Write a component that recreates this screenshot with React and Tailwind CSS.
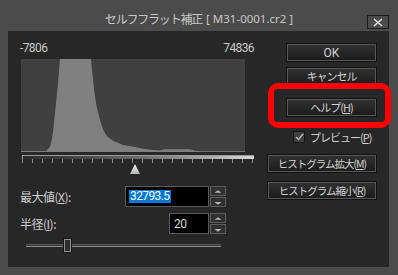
import React from "react";

const jp = { fontFamily: '"Noto Sans CJK JP", "Noto Sans", sans-serif' };
const latin = { fontFamily: '"Noto Sans", "Noto Sans CJK JP", sans-serif' };
const num = { fontFamily: 'Roboto, "Liberation Sans", sans-serif' };

// histogram outline in plot coordinates (224 x 93)
const HIST =
  "0,93 0,92 25.7,92 25.7,91.7 29,87.7 30.7,81 32.3,71 34,54 35.7,37.7 37.3,21 38.3,9 39,0 " +
  "70,0 71.7,17.7 73.3,32.7 75.7,47.7 79,61 82.3,71 85.7,77 92.3,82 102.3,86 112.3,87.7 " +
  "122.3,89.7 132.3,91 139,91.5 144,90.3 169,90.3 174,91.7 179,92.3 224,92.3 224,93";

function Btn({ children, w = "w-[91px]", text = "text-[11px] tracking-[-1px]" }) {
  return (
    <div
      className={`${w} ${text} h-[19px] border border-[#111111] bg-gradient-to-b from-[#323232] to-[#1b1b1b] shadow-[inset_0_0_0_1px_#575757] flex items-center justify-center text-[#d2d2d2]`}
      style={jp}
    >
      {children}
    </div>
  );
}

function Key({ k }) {
  return (
    <span>
      (<span className="underline underline-offset-1">{k}</span>)
    </span>
  );
}

function Spinner() {
  return (
    <div className="flex flex-col gap-[1px] w-[16px]">
      {["M4 6 L8 3 L12 6 Z", "M4 4 L8 7 L12 4 Z"].map((d, i) => (
        <div
          key={i}
          className="h-[10px] bg-[#303030] border border-[#5c5c5c] flex items-center justify-center"
        >
          <svg width="16" height="9" viewBox="0 0 16 9">
            <path d={d} fill="#b8b8b8" />
          </svg>
        </div>
      ))}
    </div>
  );
}

export default function App() {
  return (
    <div className="relative w-[398px] h-[275px] bg-[#4b4b4b] overflow-hidden">
      {/* title bar */}
      <div className="h-[31px] flex items-center justify-center pt-[7px] text-[#c8c8c8]">
        <span className="text-[12px] tracking-[-1.2px]" style={jp}>
          セルフフラット補正
        </span>
        <span className="ml-[4px] text-[11.5px] whitespace-pre" style={latin}>
          {"[ M31-0001.cr2 ]"}
        </span>
      </div>
      <div className="absolute left-[367px] top-[15px] w-[22px] h-[14px] border border-[#1c1c1c] flex items-center justify-center">
        <svg width="10" height="9" viewBox="0 0 10 9">
          <path d="M1 1 L9 8 M9 1 L1 8" stroke="#e6e6e6" strokeWidth="1.6" />
        </svg>
      </div>

      {/* client area */}
      <div className="ml-[8px] w-[381px] h-[236px] bg-[#272727] flex">
        {/* left column */}
        <div className="w-[246px] pl-[12px] flex flex-col">
          <div
            className="mt-[11px] w-[234px] h-[12px] flex justify-between items-center text-[12px] tracking-[-0.6px] leading-[12px] text-[#c8c8c8]"
            style={num}
          >
            <span>-7806</span>
            <span>74836</span>
          </div>
          <div className="mt-[5px] ml-[1px] w-[224px] h-[93px] bg-[#404040]">
            <svg width="224" height="93" viewBox="0 0 224 93">
              <polygon points={HIST} fill="#808080" />
            </svg>
          </div>
          {/* ruler */}
          <div className="mt-[3px] ml-[2px] w-[232px] flex flex-col">
            <div className="h-[1px] bg-[#9c9c9c]" />
            <div className="h-[3px] border-l border-[#9c9c9c] bg-gradient-to-r from-[#2a2a2a] via-[#6a6a6a] to-[#d8d8d8]" />
            <div className="h-[4px] bg-[repeating-linear-gradient(to_right,#8c8c8c_0_1px,transparent_1px_10px)]" />
          </div>
          <div className="mt-[1px] ml-[110px] w-[10px] h-[10px]">
            <svg width="10" height="10" viewBox="0 0 10 10">
              <defs>
                <linearGradient id="tri" x1="0" y1="0" x2="0" y2="1">
                  <stop offset="0" stopColor="#f4f4f4" />
                  <stop offset="1" stopColor="#b4b4b4" />
                </linearGradient>
              </defs>
              <polygon points="5,0 10,10 0,10" fill="url(#tri)" />
            </svg>
          </div>

          {/* max value */}
          <div className="mt-[12px] w-[206px] h-[21px] flex items-center justify-between">
            <span className="text-[12px] tracking-[-0.5px] text-[#d0d0d0]" style={jp}>
              最大値<Key k="X" />:
            </span>
            <div className="flex gap-[1px] h-[21px]">
              <div className="w-[84px] h-[21px] border border-[#5a5a5a] bg-black flex items-center pl-[3px]">
                <span
                  className="bg-[#0078d7] text-white text-[12px] tracking-[-0.6px] leading-[13px] pl-[1px] pr-[2px]"
                  style={num}
                >
                  32793.5
                </span>
              </div>
              <Spinner />
            </div>
          </div>

          {/* radius */}
          <div className="mt-[6px] w-[206px] h-[21px] flex items-center justify-between">
            <span className="text-[12px] tracking-[-0.5px] text-[#d0d0d0]" style={jp}>
              半径<Key k="I" />:
            </span>
            <div className="flex gap-[1px] h-[21px]">
              <div className="w-[40px] h-[21px] border border-[#5a5a5a] bg-black flex items-center pl-[4px]">
                <span className="text-[#d8d8d8] text-[12px] tracking-[-0.6px] leading-[12px]" style={num}>
                  20
                </span>
              </div>
              <Spinner />
            </div>
          </div>

          {/* slider */}
          <div className="mt-[5px] ml-[6px] w-[195px] h-[13px] flex items-center">
            <div className="relative w-full h-[3px] border-t border-[#555555] border-b border-b-[#8a8a8a] bg-[#3a3a3a]">
              <div className="absolute left-[38px] top-[-6px] w-[7px] h-[13px] bg-[#2e2e2e] border border-[#909090] shadow-[0_0_0_1px_#151515]" />
            </div>
          </div>
        </div>

        {/* right column */}
        <div className="flex-1 pr-[12px] flex flex-col items-end">
          <div className="mt-[12px]">
            <Btn>
              <span style={num} className="text-[12px] tracking-normal">OK</span>
            </Btn>
          </div>
          <div className="mt-[5px]">
            <Btn>キャンセル</Btn>
          </div>
          <div className="mt-[12px]">
            <Btn>
              ヘルプ<Key k="H" />
            </Btn>
          </div>
          <div className="mt-[14px] w-[91px] pl-[7px] h-[12px] flex items-center gap-[5px]">
            <div className="w-[12px] h-[12px] bg-[#3e3e3e] border border-[#161616] flex items-center justify-center">
              <svg width="9" height="8" viewBox="0 0 9 8">
                <path d="M1 4 L3.5 6.5 L8 1" stroke="#b4b4b4" strokeWidth="1.5" fill="none" />
              </svg>
            </div>
            <span className="text-[11px] tracking-[-1px] text-[#d2d2d2]" style={jp}>
              プレビュー<Key k="P" />
            </span>
          </div>
          <div className="mt-[11px]">
            <Btn w="w-[110px]" text="text-[10.5px] tracking-[-1px]">
              ヒストグラム拡大<Key k="M" />
            </Btn>
          </div>
          <div className="mt-[8px]">
            <Btn w="w-[110px]" text="text-[10.5px] tracking-[-1px]">
              ヒストグラム縮小<Key k="R" />
            </Btn>
          </div>
        </div>
      </div>

      {/* annotation */}
      <div className="absolute left-[268px] top-[83px] w-[123px] h-[45px] border-[6px] border-[#ff0000] rounded-[10px]" />
    </div>
  );
}
